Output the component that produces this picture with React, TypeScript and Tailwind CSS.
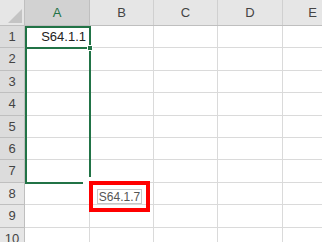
const cols = [
  { key: "A", w: 65 },
  { key: "B", w: 64 },
  { key: "C", w: 64 },
  { key: "D", w: 65 },
  { key: "E", w: 60 },
];

const rowHeights = [22, 23, 22, 23, 22, 22, 23, 22, 23, 22];

const cellFont = { fontFamily: '"Liberation Sans", "Noto Sans CJK JP", sans-serif' };

export default function App() {
  return (
    <div
      className="relative w-[322px] h-[242px] overflow-hidden bg-white"
      style={cellFont}
    >
      {/* header row */}
      <div className="flex h-[26px] bg-[#e6e6e6] border-b border-[#bfbfbf]">
        <div className="w-[25px] shrink-0 border-r border-[#bfbfbf] flex items-end justify-end p-[2px]">
          <div className="w-0 h-0 border-l-[14px] border-l-transparent border-b-[14px] border-b-[#c4c4c4]" />
        </div>
        {cols.map((c) => (
          <div
            key={c.key}
            style={{ width: c.w }}
            className={
              c.key === "A"
                ? "shrink-0 flex items-center justify-center text-[13px] text-[#217346] bg-[#d2d2d2] border-r border-[#bfbfbf]"
                : "shrink-0 flex items-center justify-center text-[13px] text-[#444] border-r border-[#d0d0d0]"
            }
          >
            {c.key}
          </div>
        ))}
      </div>

      {/* rows */}
      {rowHeights.map((h, i) => {
        const n = i + 1;
        const selected = n <= 7;
        return (
          <div key={n} className="flex" style={{ height: h }}>
            <div
              className={
                selected
                  ? "w-[25px] shrink-0 flex items-center justify-center text-[13px] text-[#444] bg-[#dcdcdc] border-r border-b border-[#bfbfbf]"
                  : "w-[25px] shrink-0 flex items-center justify-center text-[13px] text-[#444] bg-[#e6e6e6] border-r border-b border-[#bfbfbf]"
              }
            >
              {n}
            </div>
            {cols.map((c) => (
              <div
                key={c.key}
                style={{ width: c.w }}
                className="shrink-0 border-r border-b border-[#dadada] flex items-center justify-end pr-[3px] text-[13px] text-[#222]"
              >
                {n === 1 && c.key === "A" ? "S64.1.1" : ""}
              </div>
            ))}
          </div>
        );
      })}

      {/* selection A1:A7, fill handle being dragged */}
      <div className="absolute left-[25px] top-[26px] w-[66px] h-[158px] border-2 border-[#217346] flex flex-col justify-between">
        <div className="relative h-[21px] border-b-2 border-[#217346]">
          <div className="absolute right-[-4px] bottom-[-4px] w-[6px] h-[6px] bg-[#217346] border border-white" />
        </div>
        <div className="self-end mr-[-2px] mb-[-2px] w-[8px] h-[7px] bg-white" />
      </div>

      {/* fill tooltip */}
      <div className="absolute left-[89px] top-[181px] w-[61px] h-[31px] border-4 border-[#ff0000] flex items-center justify-center">
        <div className="h-[15px] px-[1px] border border-[#c8c8c8] bg-white flex items-center text-[12px] leading-none text-[#555]">
          S64.1.7
        </div>
      </div>
    </div>
  );
}
